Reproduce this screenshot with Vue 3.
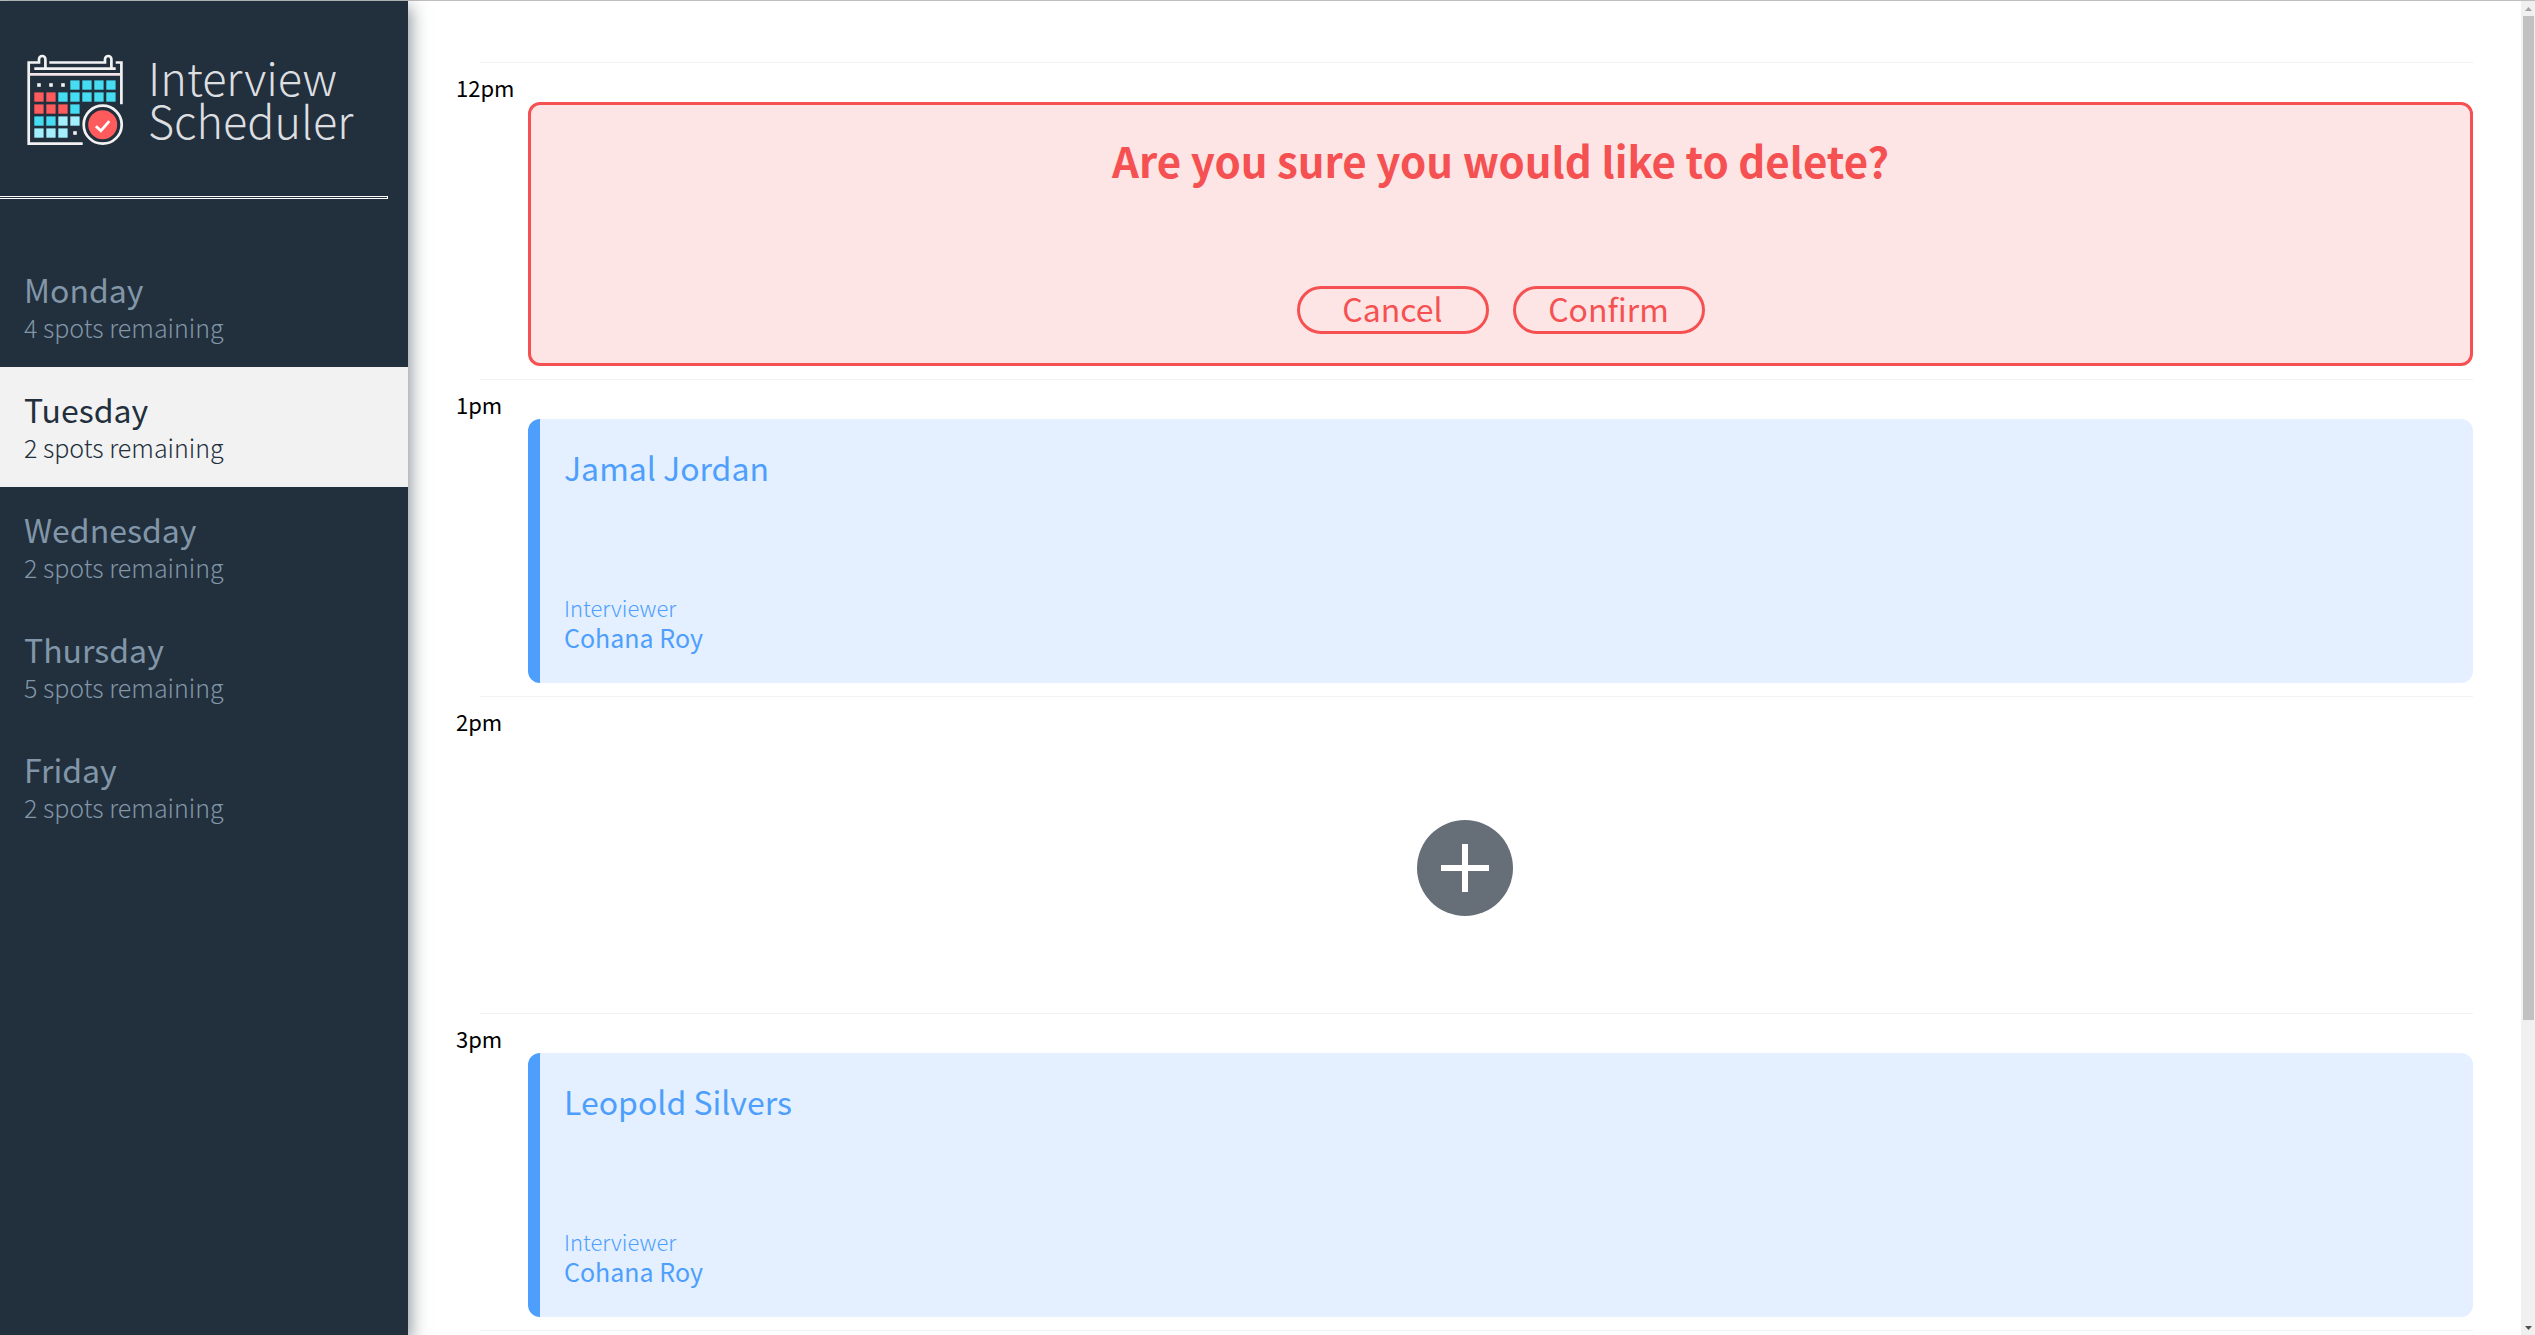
<script setup>
import { ref } from 'vue'

const days = [
  { name: 'Monday', spots: 4 },
  { name: 'Tuesday', spots: 2 },
  { name: 'Wednesday', spots: 2 },
  { name: 'Thursday', spots: 5 },
  { name: 'Friday', spots: 2 },
]
const selected = ref('Tuesday')

const appointments = [
  { time: '12pm', mode: 'confirm' },
  { time: '1pm', mode: 'show', student: 'Jamal Jordan', interviewer: 'Cohana Roy' },
  { time: '2pm', mode: 'empty' },
  { time: '3pm', mode: 'show', student: 'Leopold Silvers', interviewer: 'Cohana Roy' },
]

const cyan = '#46ddf3'
const red = '#ff5b5d'
const pale = '#a3f0fc'
const cells = [
  [null, null, null, cyan, cyan, cyan, cyan],
  [red, red, cyan, cyan, cyan, cyan, cyan],
  [red, red, red, cyan],
  [cyan, cyan, pale, pale],
  [pale, pale, pale],
].flatMap((row, r) => row.map((fill, c) => ({ fill, x: 7.3 + c * 12, y: 26.4 + r * 12 })))
  .filter((cell) => cell.fill)
const dots = [[12, 31], [24, 31], [36, 31], [48, 79]]
</script>

<template>
  <div class="layout">
    <aside class="sidebar">
      <header class="brand">
        <svg class="brand-icon" viewBox="0 0 96 92" aria-hidden="true">
          <g fill="none" stroke="#f2f2f2" stroke-width="2.7">
            <path d="M55.7 89.6H1.7V8.5H12V5.2a3.2 3.2 0 0 1 6.4 0V14.6" />
            <path d="M22.3 8.5H78V5.2a3.2 3.2 0 0 1 6.4 0V14.6" />
            <path d="M88.7 8.5H94.4V50.3" />
            <path d="M7.3 14.6H88.7" />
            <path d="M1.7 20.3H94.4" stroke="#f4e6e8" />
            <circle cx="75.7" cy="70.7" r="19" />
          </g>
          <rect v-for="cell in cells" :key="`${cell.x}-${cell.y}`" :x="cell.x" :y="cell.y" width="9.3" height="9.3" :fill="cell.fill" />
          <rect v-for="[x, y] in dots" :key="`${x}-${y}`" :x="x - 1.8" :y="y - 1.8" width="3.6" height="3.6" fill="#f2f2f2" />
          <circle cx="75.7" cy="70.7" r="14.5" fill="#ff5b5d" />
          <path d="M68.9 72.2l5 4.6 8.4-9.6" fill="none" stroke="#fff" stroke-width="2.8" />
        </svg>
        <h1 class="brand-name">Interview<br />Scheduler</h1>
      </header>
      <hr class="divider" />
      <nav class="days">
        <button
          v-for="day in days"
          :key="day.name"
          type="button"
          class="day"
          :class="{ selected: day.name === selected }"
          @click="selected = day.name"
        >
          <span class="day-name">{{ day.name }}</span>
          <span class="day-spots">{{ day.spots }} spots remaining</span>
        </button>
      </nav>
    </aside>

    <main class="schedule">
      <section v-for="slot in appointments" :key="slot.time" class="slot">
        <h2 class="time">{{ slot.time }}</h2>

        <div v-if="slot.mode === 'confirm'" class="card confirm">
          <p class="question">Are you sure you would like to delete?</p>
          <div class="actions">
            <button type="button" class="pill">Cancel</button>
            <button type="button" class="pill">Confirm</button>
          </div>
        </div>

        <article v-else-if="slot.mode === 'show'" class="card show">
          <h3 class="student">{{ slot.student }}</h3>
          <div>
            <h4 class="role">Interviewer</h4>
            <p class="interviewer">{{ slot.interviewer }}</p>
          </div>
        </article>

        <div v-else class="empty">
          <button type="button" class="add" aria-label="Add">
            <svg viewBox="0 0 96 96" aria-hidden="true">
              <circle cx="48" cy="48" r="48" fill="#666e78" />
              <path d="M48 24v48M24 48h48" stroke="#fff" stroke-width="6" />
            </svg>
          </button>
        </div>
      </section>
      <div class="slot-end"></div>
    </main>

    <div class="scrollbar" aria-hidden="true">
      <svg class="arrow" viewBox="0 0 14 15"><path d="M4 10h7L7.500 6z" fill="#a3a3a3" /></svg>
      <div class="track"><div class="thumb"></div></div>
      <svg class="arrow" viewBox="0 0 14 15"><path d="M4 6h7L7.500 10z" fill="#505050" /></svg>
    </div>
  </div>
</template>

<style>
body {
  margin: 0;
  overflow: hidden;
}
</style>

<style scoped>
.layout {
  box-sizing: border-box;
  display: flex;
  height: 100vh;
  border-top: 1px solid #bfbfbf;
  background: #fff;
  color: #000;
  font-family: "Noto Sans CJK SC", "Noto Sans", sans-serif;
}

h1, h2, h3, h4, p {
  margin: 0;
  font-weight: 400;
}

button {
  margin: 0;
  font-family: inherit;
  cursor: pointer;
}

.sidebar {
  position: relative;
  flex: 0 0 408px;
  background: #222f3c;
  box-shadow: 3px 6px 16px rgba(34, 47, 60, 0.5);
}

.brand {
  display: flex;
  gap: 25px;
  padding: 53px 24px 50px 27px;
}

.brand-icon {
  flex: none;
  width: 96px;
  height: 92px;
}

.brand-name {
  padding-top: 1px;
  color: #dcdee0;
  font-size: 45px;
  font-weight: 300;
  line-height: 43px;
}

.divider {
  height: 1px;
  margin: 0 20px 48px 0;
  border: 1px solid #fff;
  border-left: 0;
}

.days {
  display: flex;
  flex-direction: column;
}

.day {
  display: flex;
  flex-direction: column;
  padding: 24px 24px 20px;
  border: 0;
  background: none;
  color: #8196a8;
  text-align: left;
}

.day.selected {
  background: #f2f2f2;
  color: #222f3c;
}

.day-name {
  font-size: 32px;
  line-height: 36px;
}

.day-spots {
  font-size: 25px;
  font-weight: 300;
  line-height: 40px;
}

.schedule {
  flex: 1;
  min-width: 0;
  padding: 61px 48px 0;
  overflow: hidden;
}

.slot::before,
.slot-end {
  display: block;
  height: 1px;
  margin-left: 24px;
  background: #f2f2f2;
  content: "";
}

.slot {
  padding-bottom: 13px;
}

.time {
  padding: 12px 0 3px;
  font-size: 22px;
  line-height: 24px;
}

.card {
  box-sizing: border-box;
  display: flex;
  flex-direction: column;
  justify-content: space-between;
  min-height: 264px;
  margin-left: 72px;
  border-radius: 12px;
}

.confirm {
  align-items: center;
  padding: 30px 24px 29px;
  border: 3px solid #f65152;
  background: #fce5e4;
  color: #f65152;
}

.question {
  font-size: 42px;
  font-weight: 700;
  line-height: 50px;
}

.actions {
  display: flex;
  gap: 24px;
}

.pill {
  width: 192px;
  height: 48px;
  padding: 0 0 4px;
  border: 3px solid #f65152;
  border-radius: 24px;
  background: transparent;
  color: #f65152;
  font-size: 32px;
  line-height: 36px;
}

.show {
  padding: 24px 24px 30px;
  border-left: 12px solid #4e9ffd;
  background: #e4f0ff;
  color: #4e9ffd;
}

.student {
  font-size: 32px;
  line-height: 48px;
}

.role {
  font-size: 22px;
  font-weight: 300;
  line-height: 28px;
}

.interviewer {
  font-size: 25px;
  line-height: 32px;
}

.empty {
  display: flex;
  align-items: center;
  justify-content: center;
  min-height: 264px;
}

.add {
  width: 96px;
  height: 96px;
  padding: 0;
  border: 0;
  border-radius: 50%;
  background: none;
}

.add svg {
  display: block;
}

.scrollbar {
  display: flex;
  flex: 0 0 14px;
  flex-direction: column;
  background: #f0f0f0;
}

.arrow {
  flex: none;
  width: 14px;
  height: 15px;
}

.track {
  flex: 1;
  padding: 0 1px 0 2px;
}

.thumb {
  height: 77%;
  background: #c1c1c1;
}
</style>
